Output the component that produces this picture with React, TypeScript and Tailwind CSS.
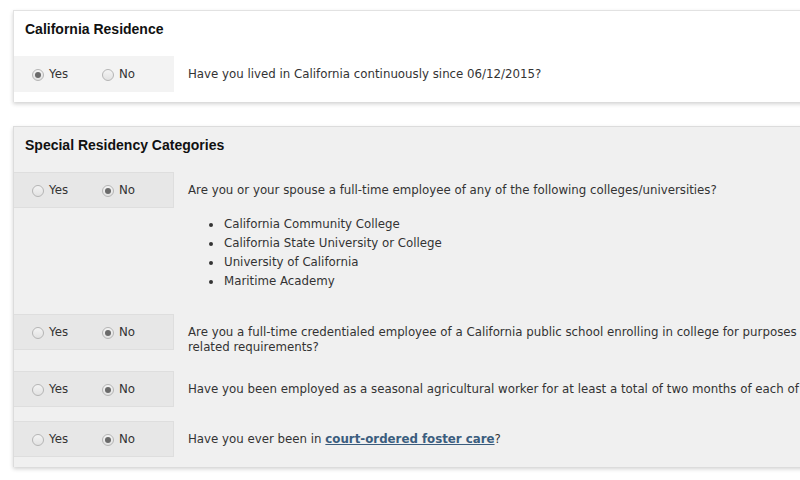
import React from 'react';

const Radio: React.FC<{ checked?: boolean; label: string }> = ({ checked, label }) => (
    <label className="flex items-center gap-[5px]">
        <span className="w-[12px] h-[12px] rounded-full border border-[#b5b5b5] bg-gradient-to-b from-[#f4f4f4] to-[#e2e2e2] flex items-center justify-center shrink-0">
            {checked && <span className="w-[6px] h-[6px] rounded-full bg-[#6a6a6a]" />}
        </span>
        <span>{label}</span>
    </label>
);

const RadioBox: React.FC<{ yes: boolean; tone: 'light' | 'dark' }> = ({ yes, tone }) => (
    <div
        className={`w-[160px] h-[36px] shrink-0 flex items-center pl-[18px] gap-[34px] pt-[1px] ${
            tone === 'light' ? 'bg-[#f3f3f3]' : 'bg-[#e7e7e7] border border-l-0 border-[#dedede]'
        }`}
    >
        <Radio checked={yes} label="Yes" />
        <Radio checked={!yes} label="No" />
    </div>
);

const Question: React.FC<{ yes: boolean; tone: 'light' | 'dark'; children: React.ReactNode; className?: string }> = ({
    yes,
    tone,
    children,
    className = '',
}) => (
    <div className={`flex ${className}`}>
        <RadioBox yes={yes} tone={tone} />
        <div className="pl-[14px] pt-[11px] leading-[15px] whitespace-nowrap">{children}</div>
    </div>
);

export default function App() {
    return (
        <div className="w-[800px] h-[480px] overflow-hidden bg-white text-[11.8px] text-[#333] pt-[10px] pl-[13px]" style={{ fontFamily: '"DejaVu Sans", Verdana, sans-serif' }}>
            {/* California Residence */}
            <section className="w-[900px] bg-white border-t border-l border-[#e2e2e2] shadow-[0_2px_4px_rgba(0,0,0,0.18)] pb-[10px]">
                <h2 className="pl-[11px] pt-[10px] h-[46px] text-[14px] leading-[16px] font-bold text-[#111]" style={{ fontFamily: '"Liberation Sans", Arial, sans-serif' }}>
                    California Residence
                </h2>
                <Question yes tone="light" className="-mt-px">
                    Have you lived in California continuously since 06/12/2015?
                </Question>
            </section>

            {/* Special Residency Categories */}
            <section className="mt-[24px] w-[900px] bg-[#f0f0f0] border-t border-l border-[#dcdcdc] shadow-[0_2px_4px_rgba(0,0,0,0.18)] pb-[10px]">
                <h2 className="pl-[11px] pt-[10px] h-[46px] text-[14px] leading-[16px] font-bold text-[#111]" style={{ fontFamily: '"Liberation Sans", Arial, sans-serif' }}>
                    Special Residency Categories
                </h2>
                <Question yes={false} tone="dark" className="-mt-px">
                    Are you or your spouse a full-time employee of any of the following colleges/universities?
                </Question>
                <ul className="ml-[195px] mt-[7px] mb-[23px] leading-[19px]">
                    {['California Community College', 'California State University or College', 'University of California', 'Maritime Academy'].map(
                        (item) => (
                            <li key={item} className="flex items-center gap-[11px]">
                                <span className="w-[4px] h-[4px] rounded-full bg-[#333]" />
                                {item}
                            </li>
                        )
                    )}
                </ul>
                <Question yes={false} tone="dark" className="pb-[16px]">
                    Are you a full-time credentialed employee of a California public school enrolling in college for purposes of fulfilling credential-
                    <br />
                    related requirements?
                </Question>
                <Question yes={false} tone="dark" className="mb-[14px]">
                    Have you been employed as a seasonal agricultural worker for at least a total of two months of each of the preceding two years?
                </Question>
                <Question yes={false} tone="dark">
                    Have you ever been in{' '}
                    <a href="#" className="font-bold text-[#3b5d7e] underline">
                        court-ordered foster care
                    </a>
                    ?
                </Question>
            </section>
        </div>
    );
}
